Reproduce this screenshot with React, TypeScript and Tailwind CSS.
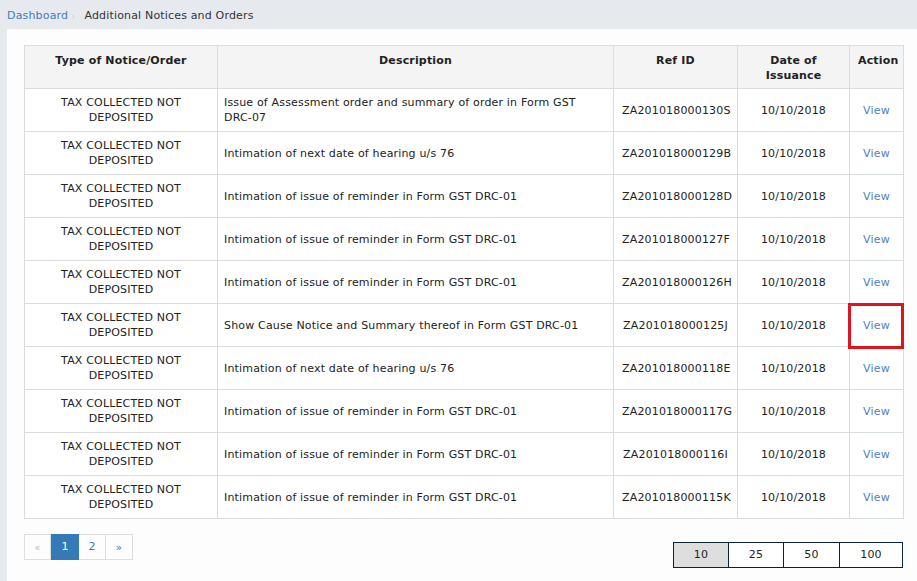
const rows = [
  ['Issue of Assessment order and summary of order in Form GST', 'ZA201018000130S'],
  ['Intimation of next date of hearing u/s 76', 'ZA201018000129B'],
  ['Intimation of issue of reminder in Form GST DRC-01', 'ZA201018000128D'],
  ['Intimation of issue of reminder in Form GST DRC-01', 'ZA201018000127F'],
  ['Intimation of issue of reminder in Form GST DRC-01', 'ZA201018000126H'],
  ['Show Cause Notice and Summary thereof in Form GST DRC-01', 'ZA201018000125J'],
  ['Intimation of next date of hearing u/s 76', 'ZA201018000118E'],
  ['Intimation of issue of reminder in Form GST DRC-01', 'ZA201018000117G'],
  ['Intimation of issue of reminder in Form GST DRC-01', 'ZA201018000116I'],
  ['Intimation of issue of reminder in Form GST DRC-01', 'ZA201018000115K'],
]

const th = 'border border-[#dcdcdc] px-2 pt-[7px] pb-0 align-top font-bold text-[#222] leading-[15px] h-[43px]'
const td = 'border border-[#dcdcdc] px-2 align-middle leading-[15px] h-[43px]'

export default function App() {
  return (
    <main className="min-h-screen w-[917px] h-[581px] overflow-hidden bg-[#e6eaef] text-[11px] tracking-[0.17px] text-[#222]" style={{ fontFamily: '"DejaVu Sans", Verdana, sans-serif' }}>
      <div className="h-[29px] flex items-center pl-[7px] pt-[3px]">
        <a className="text-[#3f7abc]">Dashboard</a>
        <span className="ml-[3px] text-[#c8ccd2] text-[10px]">›</span>
        <span className="ml-[9px] text-[#333]">Additional Notices and Orders</span>
      </div>
      <section className="ml-[7px] h-[552px] bg-[#fdfdfd] pt-[16px] pl-[17px] pr-[14px]">
        <table className="w-[879px] border-collapse table-fixed">
          <colgroup>
            <col className="w-[193px]" />
            <col className="w-[396px]" />
            <col className="w-[124px]" />
            <col className="w-[112px]" />
            <col className="w-[54px]" />
          </colgroup>
          <thead>
            <tr className="bg-[#f4f4f4]">
              <th className={th}>Type of Notice/Order</th>
              <th className={th}>Description</th>
              <th className={th}>Ref ID</th>
              <th className={th}>Date of<br />Issuance</th>
              <th className={th}>Action</th>
            </tr>
          </thead>
          <tbody>
            {rows.map(([desc, ref], i) => (
              <tr key={ref} className="bg-white">
                <td className={td + ' text-center'}>TAX COLLECTED NOT<br />DEPOSITED</td>
                <td className={td + ' text-left pl-[6px]'}>
                  {desc}
                  {i === 0 && <><br />DRC-07</>}
                </td>
                <td className={td + ' text-center'}>{ref}</td>
                <td className={td + ' text-center'}>10/10/2018</td>
                <td className="relative border border-[#d6dfd8] h-[43px] leading-[15px] align-middle text-center text-[#4f7fbf]">
                  View
                  {i === 5 && (
                    <div className="absolute -left-[2px] -top-px w-[56px] h-[46px] border-[3px] border-[#e0141e]" />
                  )}
                </td>
              </tr>
            ))}
          </tbody>
        </table>
        <div className="flex items-start justify-between mt-[15px]">
          <div className="flex">
            <span className="w-[27px] h-[26px] flex items-center justify-center border border-[#ddd] text-[#bbb] text-[10px]">«</span>
            <span className="w-[28px] h-[26px] flex items-center justify-center bg-[#337ab7] border border-[#337ab7] text-white">1</span>
            <span className="w-[27px] h-[26px] flex items-center justify-center border border-[#ddd] border-l-0 text-[#337ab7]">2</span>
            <span className="w-[27px] h-[26px] flex items-center justify-center border border-[#ddd] border-l-0 text-[#337ab7] text-[10px]">»</span>
          </div>
          <div className="flex mt-[8px]">
            <span className="w-[56px] h-[26px] flex items-center justify-center border border-[#0d2236] bg-[#dedede]">10</span>
            <span className="w-[55px] h-[26px] flex items-center justify-center border border-[#0d2236] border-l-0 bg-white">25</span>
            <span className="w-[56px] h-[26px] flex items-center justify-center border border-[#0d2236] border-l-0 bg-white">50</span>
            <span className="w-[63px] h-[26px] flex items-center justify-center border border-[#0d2236] border-l-0 bg-white">100</span>
          </div>
        </div>
      </section>
    </main>
  )
}
